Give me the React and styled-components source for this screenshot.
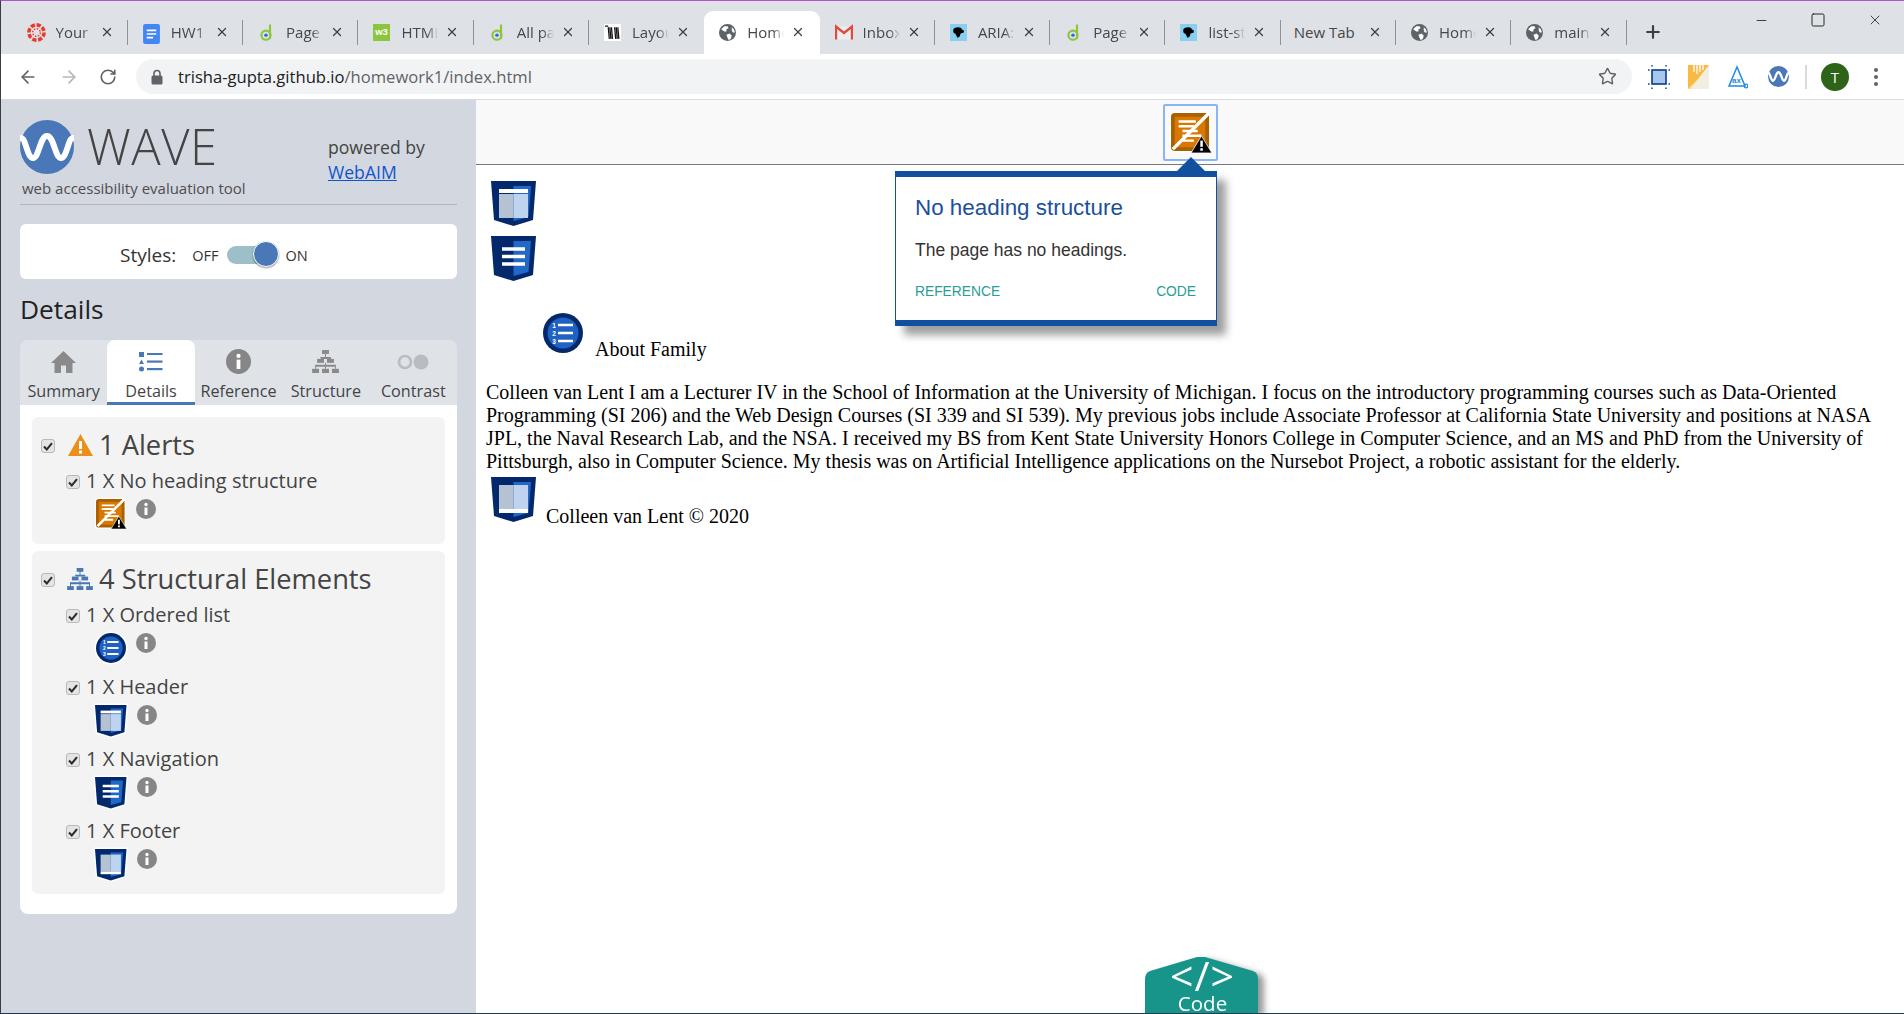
import React from 'react';
import styled, { createGlobalStyle } from 'styled-components';
import { ArrowLeft, ArrowRight, RotateCw, Star, X, Plus, Minus, Square } from 'lucide-react';

const GlobalStyle = createGlobalStyle`
  html, body { margin: 0; padding: 0; background: #fff; }
  body { width: 1904px; height: 1014px; overflow: hidden; }
`;

const Frame = styled.div`
  width: 1904px;
  height: 1014px;
  box-sizing: border-box;
  border-top: 1px solid #b651cc;
  border-left: 1px solid #3a3d42;
  border-bottom: 1px solid #1d3b4f;
  display: flex;
  flex-direction: column;
  font-family: 'Open Sans', sans-serif;
  overflow: hidden;
`;

const TabStrip = styled.div`
  height: 53px;
  flex: none;
  background: #dee1e6;
  display: flex;
  align-items: flex-end;
  padding-left: 11.5px;
  position: relative;
`;

const Tab = styled.div`
  flex: 0 0 115.3px;
  height: 43px;
  box-sizing: border-box;
  display: flex;
  align-items: center;
  padding-left: ${p => (p.$bare ? '13px' : '15px')};
  padding-bottom: 1px;
  background: ${p => (p.$active ? '#fff' : 'transparent')};
  border-radius: 9px 9px 0 0;
  color: #45474a;
  font-size: 15px;
`;

const TabIcon = styled.span`
  width: 17px;
  height: 17px;
  flex: none;
  margin-right: 11px;
  display: block;
  svg { display: block; }
`;

const TabTitle = styled.span`
  width: ${p => (p.$bare ? '70px' : '37px')};
  flex: none;
  overflow: hidden;
  white-space: nowrap;
  -webkit-mask-image: ${p => (p.$bare ? 'none' : 'linear-gradient(to right, #000 70%, transparent 100%)')};
`;

const TabClose = styled.span`
  margin-left: ${p => (p.$bare ? '4px' : '7px')};
  flex: none;
  display: flex;
  color: #3c4043;
`;

const TabDivider = styled.span`
  width: 1px;
  height: 25px;
  margin-left: auto;
  background: ${p => (p.$hidden ? 'transparent' : '#8f9296')};
`;

const NewTab = styled.span`
  display: flex;
  margin: 0 0 12px 16px;
  color: #3c4043;
`;

const WindowControls = styled.div`
  position: absolute;
  top: 9px;
  right: 21px;
  display: flex;
  align-items: center;
  gap: 41px;
  color: #1a1a1a;
  span { display: flex; width: 16px; justify-content: center; }
`;

const Toolbar = styled.div`
  height: 46px;
  flex: none;
  box-sizing: border-box;
  background: #fff;
  border-bottom: 1px solid #dcdcdc;
  display: flex;
  align-items: center;
`;

const NavButton = styled.span`
  width: 20px;
  display: flex;
  justify-content: center;
  margin-left: ${p => p.$gap}px;
  color: ${p => (p.$dim ? '#b4b6b9' : '#5f6368')};
`;

const Omnibox = styled.div`
  width: 1496px;
  height: 35px;
  margin-left: 18px;
  border-radius: 18px;
  background: #f1f3f4;
  display: flex;
  align-items: center;
  padding: 0 15px;
  box-sizing: border-box;
  font-size: 16.6px;
  color: #5f6368;
`;

const Host = styled.span`
  color: #202124;
`;

const UrlText = styled.span`
  margin-left: 15px;
  white-space: nowrap;
`;

const StarButton = styled.span`
  margin-left: auto;
  display: flex;
  color: #5f6368;
`;

const ExtIcon = styled.span`
  display: flex;
  margin-left: ${p => p.$gap}px;
`;

const ExtDivider = styled.span`
  width: 2px;
  height: 24px;
  background: #d8d9db;
  margin-left: 16px;
`;

const Avatar = styled.span`
  width: 28px;
  height: 28px;
  border-radius: 50%;
  background: #2e6417;
  color: #fff;
  display: flex;
  align-items: center;
  justify-content: center;
  font-size: 15px;
  margin-left: 14px;
`;

const Dots = styled.span`
  display: flex;
  flex-direction: column;
  gap: 3px;
  margin-left: 25px;
  i { width: 4px; height: 4px; border-radius: 50%; background: #5f6368; display: block; }
`;

const Body = styled.div`
  flex: 1;
  display: flex;
  min-height: 0;
`;

const Sidebar = styled.aside`
  width: 475px;
  flex: none;
  background: #d3d8e0;
  box-sizing: border-box;
  padding: 19px 19px 0 19px;
`;

const Brand = styled.div`
  display: flex;
  height: 85px;
  border-bottom: 1px solid #b2b6bc;
`;

const BrandLeft = styled.div`
  width: 308px;
  flex: none;
`;

const LogoRow = styled.div`
  display: flex;
  align-items: center;
  height: 55px;
`;

const WaveWord = styled.span`
  font-size: 49px;
  font-weight: 300;
  color: #444;
  margin-left: 13px;
  line-height: 55px;
  letter-spacing: .5px;
`;

const Tagline = styled.div`
  font-size: 15px;
  color: #4e4e4e;
  margin: 4px 0 0 2px;
  white-space: nowrap;
`;

const Powered = styled.div`
  font-size: 17.6px;
  line-height: 25px;
  color: #444;
  padding-top: 16px;
`;

const PoweredLink = styled.a`
  color: #1155cc;
  text-decoration: underline;
  display: block;
`;

const StylesCard = styled.div`
  height: 55px;
  box-sizing: border-box;
  padding: 7px 0 0 100px;
  margin-top: 19px;
  background: #fff;
  border-radius: 6px;
  display: flex;
  align-items: center;
  color: #333;
`;

const StylesLabel = styled.span`
  font-size: 19px;
`;

const SwitchLabel = styled.span`
  font-size: 14.5px;
  margin-left: ${p => p.$gap}px;
`;

const SwitchTrack = styled.span`
  width: 43px;
  height: 18px;
  border-radius: 9px;
  background: #9dbfc8;
  margin-left: 9px;
  position: relative;
`;

const SwitchKnob = styled.span`
  position: absolute;
  right: -9px;
  top: -5px;
  width: 24px;
  height: 24px;
  border-radius: 50%;
  background: #4a77b8;
  border: 1px solid #fff;
  box-shadow: 0 1px 2px rgba(0, 0, 0, .4);
`;

const DetailsHeading = styled.h2`
  margin: 12px 0 0;
  font-size: 26.3px;
  font-weight: 400;
  line-height: 36px;
  color: #222;
`;

const SideTabs = styled.div`
  margin-top: 13px;
  height: 65px;
  background: #dfe3e8;
  border-radius: 8px 8px 0 0;
  display: grid;
  grid-template-columns: repeat(5, 1fr);
`;

const SideTab = styled.div`
  display: flex;
  flex-direction: column;
  align-items: center;
  box-sizing: border-box;
  padding-top: 9px;
  background: ${p => (p.$active ? '#fff' : 'transparent')};
  border-radius: ${p => (p.$active ? '8px 8px 0 0' : '0')};
  border-bottom: 3px solid ${p => (p.$active ? '#4a77b8' : 'transparent')};
  color: #444;
  font-size: 16.2px;
`;

const SideTabIcon = styled.span`
  height: 25px;
  display: flex;
  align-items: center;
`;

const SideTabText = styled.span`
  margin-top: 6px;
  line-height: 22px;
  white-space: nowrap;
`;

const Panel = styled.div`
  background: #fff;
  border-radius: 0 0 8px 8px;
  padding: 12px 12px 20px;
  display: flex;
  flex-direction: column;
  gap: 7px;
`;

const Group = styled.section`
  background: #f3f3f3;
  border-radius: 6px;
  padding: 8px 9px 12px;
  color: #444;
`;

const GroupHead = styled.div`
  height: 40px;
  display: flex;
  align-items: center;
  margin-bottom: 3px;
`;

const GroupIcon = styled.span`
  width: 26px;
  display: flex;
  justify-content: center;
  margin-left: 12px;
  margin-right: 6px;
`;

const GroupTitle = styled.span`
  font-size: 27.3px;
  line-height: 40px;
`;

const CheckBox = styled.span`
  width: 14px;
  height: 14px;
  flex: none;
  box-sizing: border-box;
  border: 1px solid #b9b9b9;
  border-radius: 3px;
  background: #e4e4e4;
  display: flex;
  align-items: center;
  justify-content: center;
  margin-top: 2px;
`;

const ItemRow = styled.div`
  height: 26px;
  display: flex;
  align-items: center;
  padding-left: 25px;
  font-size: 20px;
`;

const ItemText = styled.span`
  margin: -2px 0 0 6px;
`;

const ItemIcons = styled.div`
  margin-top: 5px;
  height: 33px;
  display: flex;
  align-items: flex-start;
  padding-left: ${p => p.$pad}px;
  margin-bottom: ${p => (p.$last ? 0 : 8)}px;
`;

const InfoSlot = styled.span`
  margin-left: ${p => p.$gap}px;
  display: flex;
`;

const Content = styled.main`
  flex: 1;
  position: relative;
  background: #fff;
  min-width: 0;
`;

const IconBar = styled.div`
  height: 65px;
  box-sizing: border-box;
  background: #f9f9f9;
  border-bottom: 1px solid #777;
  display: flex;
  padding-top: 4px;
  padding-left: 687px;
`;

const SelectedIcon = styled.span`
  width: 55px;
  height: 57px;
  box-sizing: border-box;
  border: 2px solid #8ab4f8;
  border-radius: 2px;
  display: flex;
  align-items: center;
  justify-content: center;
`;

const Page = styled.div`
  padding: 16px 10px 0;
  font-family: 'Liberation Serif', serif;
  font-size: 20px;
  line-height: 23px;
  color: #000;
`;

const LandmarkRow = styled.div`
  display: flex;
  padding-left: 5px;
  margin-bottom: 10px;
  height: 45px;
`;

const ListRow = styled.div`
  display: flex;
  align-items: flex-start;
  margin-top: 32px;
  padding-left: 57px;
  height: 48px;
`;

const ListText = styled.span`
  margin: 25px 0 0 12px;
`;

const Paragraph = styled.p`
  margin: 20px 0 0;
`;

const FooterRow = styled.div`
  display: flex;
  align-items: flex-end;
  padding-left: 5px;
  margin-top: 4px;
`;

const FooterText = styled.span`
  margin-left: 10px;
  margin-bottom: -6px;
`;

const Tooltip = styled.div`
  position: absolute;
  left: 419px;
  top: 71px;
  width: 322px;
  height: 155px;
  box-sizing: border-box;
  background: #fff;
  border: 1px solid #11509f;
  border-width: 6px 1px;
  box-shadow: 9px 9px 8px rgba(0, 0, 0, .38);
  padding: 17px 20px 0 19px;
  font-family: 'Liberation Sans', Arial, sans-serif;
  &::before {
    content: '';
    position: absolute;
    top: -20px;
    right: 11px;
    border: solid transparent;
    border-width: 0 14px 14px;
    border-bottom-color: #11509f;
  }
`;

const TooltipTitle = styled.h3`
  margin: 0;
  font-size: 22.4px;
  font-weight: 400;
  line-height: 28px;
  color: #1b4f9c;
`;

const TooltipBody = styled.p`
  margin: 17px 0 0;
  font-size: 17.5px;
  line-height: 22px;
  color: #333;
`;

const TooltipLinks = styled.div`
  display: flex;
  justify-content: space-between;
  margin-top: 22px;
  font-size: 13.8px;
  line-height: 18px;
  color: #2a9d96;
`;

const CodeTab = styled.div`
  position: absolute;
  left: 669px;
  top: 857px;
  width: 113px;
  height: 56px;
  filter: drop-shadow(6px 3px 3px rgba(0, 0, 0, .4));
  color: #fff;
  text-align: center;
  padding-left: 2px;
  box-sizing: border-box;
  svg { position: absolute; inset: 0; }
`;

const CodeGlyph = styled.div`
  position: relative;
  font-size: 41px;
  font-weight: 500;
  line-height: 32px;
  letter-spacing: 1px;
  padding-top: 2px;
`;

const CodeLabel = styled.div`
  position: relative;
  font-size: 20.5px;
  line-height: 24px;
`;

/* drawings */

const Globe = () => (
  <svg width="17" height="17" viewBox="0 0 16 16">
    <circle cx="8" cy="8" r="8" fill="#5f6368" />
    <path d="M2 5l3-3 3 0 1 2-2 1 0 2-2 0zM7 10l3-1 2 2-1 3-2 1-1-2zM12 3l2 2 1 3-2 0-1-2z" fill="#fff" />
  </svg>
);

const DIcon = () => (
  <svg width="17" height="17" viewBox="0 0 16 16">
    <circle cx="7.5" cy="10.5" r="4.3" fill="none" stroke="#8cc63f" strokeWidth="2" />
    <path d="M11.3 0.5V14" stroke="#8cc63f" strokeWidth="2" fill="none" />
    <circle cx="7.5" cy="10.5" r="1.6" fill="#1a73c8" />
  </svg>
);

const CanvasIcon = () => (
  <svg width="19" height="19" viewBox="0 0 16 16" style={{ margin: '-1px' }}>
    <circle cx="8" cy="8" r="6.4" fill="none" stroke="#e8392b" strokeWidth="3" strokeDasharray="3.6 1.4" />
    <circle cx="8" cy="8" r="3.2" fill="none" stroke="#e8392b" strokeWidth="1.2" strokeDasharray="1.2 1.3" />
  </svg>
);

const DocsIcon = () => (
  <svg width="17" height="20" viewBox="0 0 16 19">
    <rect x="0" y="0" width="16" height="19" rx="2" fill="#4285f4" />
    <path d="M3.5 6h9M3.5 9.5h9M3.5 13h6" stroke="#fff" strokeWidth="1.6" />
  </svg>
);

const W3Icon = () => (
  <svg width="17" height="17" viewBox="0 0 16 16">
    <rect width="16" height="16" fill="#8cc63f" />
    <text x="8" y="10" fontSize="9" fontFamily="Liberation Sans" fontWeight="700" textAnchor="middle" fill="#fff">w3</text>
  </svg>
);

const BooksIcon = () => (
  <svg width="17" height="17" viewBox="0 0 16 16">
    <rect width="16" height="16" fill="#fff" />
    <path d="M1 2h3M4 3l1 11M7 3l1 11M10 3l1 11M13 3l1 11M5.500 3l1 11M11.500 3l1 11" stroke="#111" strokeWidth="1.2" />
  </svg>
);

const GmailIcon = () => (
  <svg width="18" height="17" viewBox="0 0 18 16">
    <path d="M1 2H17V15H1Z" fill="#eee" />
    <path d="M1 15V2L9 8.500 17 2V15" fill="none" stroke="#e04a3a" strokeWidth="2.400" />
  </svg>
);

const DogIcon = () => (
  <svg width="17" height="17" viewBox="0 0 16 16">
    <rect width="16" height="16" fill="#89d0f0" />
    <path d="M3 6c0-2 2-3 5-3 2 0 3 1 3 2l2 1 0 2-3 1-1 3-2 1-1-2-1-2c-1 0-2-1-2-3z" fill="#000" />
  </svg>
);

const CropIcon = () => (
  <svg width="22" height="24" viewBox="0 0 22 24">
    <rect x="4" y="5" width="14" height="14" fill="#a8c7ec" stroke="#0b3a8c" strokeWidth="1.600" />
    <path d="M0 5h1.500M20.500 5h1.500M0 19h1.500M20.500 19h1.500M4 0v1.500M18 0v1.500M4 22.500v1.500M18 22.500v1.500" stroke="#0b3a8c" strokeWidth="1.400" />
  </svg>
);

const ColorIcon = () => (
  <svg width="21" height="24" viewBox="0 0 21 24">
    <path d="M0 0h21v24H0z" fill="#fbe3a8" />
    <path d="M0 0h21L10 14 0 24z" fill="#f9ba45" />
    <path d="M21 0v24H3z" fill="#f2eee2" />
    <path d="M6 0v7M9 0v9M12 0v7M15 0v5" stroke="#fff" strokeWidth="1.300" />
  </svg>
);

const AxeIcon = () => (
  <svg width="20" height="24" viewBox="0 0 20 24">
    <path d="M9 2L1 21H17L9 2Z" fill="none" stroke="#1c8ae0" strokeWidth="1.500" />
    <text x="8.500" y="18" fontSize="8" fontFamily="Liberation Sans" fontWeight="700" textAnchor="middle" fill="#1c8ae0">ax</text>
    <circle cx="18" cy="21" r="1.800" fill="none" stroke="#1c8ae0" strokeWidth="1.200" />
  </svg>
);

const WaveLogo = ({ size, stroke }) => (
  <svg width={size} height={size} viewBox="0 0 54 54">
    <circle cx="27" cy="27" r="27" fill="#4a77b8" />
    <path d="M1 18C6 18 7 38 13 38 19 38 20 16 27 16 34 16 35 38 41 38 47 38 48 18 53 18" fill="none" stroke="#fff" strokeWidth={stroke} strokeLinecap="round" />
  </svg>
);

const Lock = () => (
  <svg width="12" height="16" viewBox="0 0 12 16">
    <path d="M3 7V4.500a3 3 0 0 1 6 0V7" fill="none" stroke="#5f6368" strokeWidth="1.600" />
    <rect x="0.500" y="6.500" width="11" height="9" rx="1.500" fill="#5f6368" />
  </svg>
);

const HomeIcon = () => (
  <svg width="25" height="22" viewBox="0 0 25 22">
    <path d="M12.500 0L25 12H21.500V22H15V14.500H10V22H3.500V12H0Z" fill="#8a8a8a" />
  </svg>
);

const ListTabIcon = () => (
  <svg width="24" height="20" viewBox="0 0 24 20" fill="#4a77b8">
    <rect x="0" y="0" width="5" height="5" />
    <path d="M2.500 7.500L5 12H0Z" />
    <circle cx="2.500" cy="17" r="2.500" />
    <rect x="8" y="1" width="15.500" height="2" />
    <rect x="8" y="8.500" width="15.500" height="2.200" />
    <rect x="8" y="16" width="15.500" height="2.200" />
  </svg>
);

const InfoIcon = ({ size = 20 }) => (
  <svg width={size} height={size} viewBox="0 0 20 20">
    <circle cx="10" cy="10" r="10" fill="#868686" />
    <circle cx="10" cy="5.500" r="1.700" fill="#fff" />
    <rect x="8.500" y="8.500" width="3" height="7.500" fill="#fff" />
  </svg>
);

const TreeIcon = ({ color, w = 27 }) => (
  <svg width={w} height={w * 0.88} viewBox="0 0 27 24" fill={color}>
    <rect x="10" y="0" width="7" height="4" />
    <rect x="5" y="9" width="7" height="4" />
    <rect x="15" y="9" width="7" height="4" />
    <rect x="0" y="19" width="7" height="5" />
    <rect x="10" y="19" width="7" height="5" />
    <rect x="20" y="19" width="7" height="5" />
    <path d="M13 4h1v3h-1zM8 7h11v2h-1v0H9zM3 15h21v2H3zM13 13h1v6h-1zM3 15h1v4H3zM23 15h1v4h-1z" />
  </svg>
);

const ContrastIcon = () => (
  <svg width="32" height="16" viewBox="0 0 32 16">
    <circle cx="8" cy="8" r="6" fill="none" stroke="#b9bcc0" strokeWidth="2.600" />
    <circle cx="24" cy="8" r="7.500" fill="#b9bcc0" />
  </svg>
);

const AlertTriangle = () => (
  <svg width="25" height="22" viewBox="0 0 25 22">
    <path d="M12.500 0L25 22H0Z" fill="#e8901a" />
    <rect x="11" y="7" width="3" height="8" fill="#fff" />
    <rect x="11" y="16.500" width="3" height="3" fill="#fff" />
  </svg>
);

const NoHeadingIcon = ({ size }) => (
  <svg width={size} height={size} viewBox="0 0 42 42" style={{ overflow: 'visible', display: 'block' }}>
    <rect x="0" y="0" width="40" height="40" rx="4" fill="#fff" stroke="#fff" strokeWidth="3" />
    <rect x="0" y="0" width="40" height="40" rx="4" fill="#a96000" />
    <rect x="4" y="4" width="32" height="32" fill="#d87800" />
    <path d="M8 9h18M8 14h16M12 19h16M12 24h20M12 29h12" stroke="#fff" strokeWidth="2.600" fill="none" />
    <path d="M40 0L2 38" stroke="#fff" strokeWidth="3.500" />
    <path d="M32 24L43 42H21Z" fill="#000" stroke="#fff" strokeWidth="0.800" />
    <rect x="30.800" y="29" width="2.600" height="6.500" fill="#fff" />
    <rect x="30.800" y="37" width="2.600" height="2.600" fill="#fff" />
  </svg>
);

const Landmark = ({ kind, size = 45, outline }) => (
  <svg width={size} height={size} viewBox="0 0 45 45" style={{ overflow: 'visible', display: 'block' }}>
    {outline && <path d="M0 0H45L42 39L22.500 45L3 39Z" fill="#fff" stroke="#fff" strokeWidth="4" />}
    <path d="M0 0H45L42 39L22.500 45L3 39Z" fill="#03286b" />
    <path d="M22.500 5H40L37.500 36L22.500 40Z" fill="#2268c9" />
    {kind === 'nav' ? (
      <path d="M11 13h23M11 20.500h23M11 28h23" stroke="#fff" strokeWidth="3.600" />
    ) : (
      <>
        <rect x="8" y={kind === 'header' ? 13 : 8} width="14.500" height="24" fill="#b5c2d4" />
        <rect x="22.500" y={kind === 'header' ? 13 : 8} width="14.500" height="24" fill="#bdd3ef" />
        <rect x="8" y={kind === 'header' ? 8 : 32} width="29" height="4" fill="#fff" />
      </>
    )}
  </svg>
);

const ListIcon = ({ size = 40, outline }) => (
  <svg width={size} height={size} viewBox="0 0 40 40" style={{ overflow: 'visible', display: 'block' }}>
    {outline && <circle cx="20" cy="20" r="22" fill="#fff" />}
    <circle cx="20" cy="20" r="20" fill="#03286b" />
    <circle cx="20" cy="20" r="15.500" fill="#1f62c4" />
    <path d="M15 12h15M15 20h15M15 28h15" stroke="#fff" strokeWidth="2.400" />
    <g fontFamily="Liberation Sans" fontSize="6.500" fontWeight="700" fill="#fff" textAnchor="middle">
      <text x="11" y="14.500">1</text>
      <text x="11" y="22.500">2</text>
      <text x="11" y="30.500">3</text>
    </g>
  </svg>
);

const Check = () => (
  <svg width="10" height="9" viewBox="0 0 10 9">
    <path d="M1 4.500L3.800 7.500L9 1.200" fill="none" stroke="#2b2b2b" strokeWidth="2" />
  </svg>
);

const TABS = [
  { icon: <CanvasIcon />, title: 'Your Profile' },
  { icon: <DocsIcon />, title: 'HW1 Doc' },
  { icon: <DIcon />, title: 'Page' },
  { icon: <W3Icon />, title: 'HTML Tutorial' },
  { icon: <DIcon />, title: 'All pages' },
  { icon: <BooksIcon />, title: 'Layout', noDivider: true },
  { icon: <Globe />, title: 'Home', active: true, noDivider: true },
  { icon: <GmailIcon />, title: 'Inbox' },
  { icon: <DogIcon />, title: 'ARIA:' },
  { icon: <DIcon />, title: 'Page' },
  { icon: <DogIcon />, title: 'list-style' },
  { title: 'New Tab' },
  { icon: <Globe />, title: 'Home' },
  { icon: <Globe />, title: 'main' },
];

const SIDE_TABS = [
  { label: 'Summary', icon: <HomeIcon /> },
  { label: 'Details', icon: <ListTabIcon />, active: true },
  { label: 'Reference', icon: <InfoIcon size={25} /> },
  { label: 'Structure', icon: <TreeIcon color="#8a8a8a" /> },
  { label: 'Contrast', icon: <ContrastIcon /> },
];

const STRUCTURE = [
  { label: '1 X Ordered list', pad: 55, gap: 10, icon: <ListIcon size={30} outline /> },
  { label: '1 X Header', pad: 54, gap: 10, icon: <Landmark kind="header" size={31.5} outline /> },
  { label: '1 X Navigation', pad: 54, gap: 10, icon: <Landmark kind="nav" size={31.5} outline /> },
  { label: '1 X Footer', pad: 54, gap: 10, icon: <Landmark kind="footer" size={31.5} outline />, last: true },
];

const Item = ({ label, icon, pad, gap, last }) => (
  <>
    <ItemRow>
      <CheckBox><Check /></CheckBox>
      <ItemText>{label}</ItemText>
    </ItemRow>
    <ItemIcons $pad={pad} $last={last}>
      {icon}
      <InfoSlot $gap={gap}><InfoIcon /></InfoSlot>
    </ItemIcons>
  </>
);

const App = () => {
  return (
    <Frame>
      <GlobalStyle />
      <TabStrip>
        {TABS.map((t, i) => (
          <Tab key={i} $active={t.active} $bare={!t.icon}>
            {t.icon && <TabIcon>{t.icon}</TabIcon>}
            <TabTitle $bare={!t.icon}>{t.title}</TabTitle>
            <TabClose $bare={!t.icon}><X size={14} strokeWidth={2.2} /></TabClose>
            <TabDivider $hidden={t.noDivider} />
          </Tab>
        ))}
        <NewTab><Plus size={20} strokeWidth={2.6} /></NewTab>
        <WindowControls>
          <span><Minus size={15} strokeWidth={1.3} /></span>
          <span><Square size={16} strokeWidth={1.4} /></span>
          <span><X size={20} strokeWidth={1.2} /></span>
        </WindowControls>
      </TabStrip>

      <Toolbar>
        <NavButton $gap={17}><ArrowLeft size={20} strokeWidth={2} /></NavButton>
        <NavButton $gap={21} $dim><ArrowRight size={20} strokeWidth={2} /></NavButton>
        <NavButton $gap={19}><RotateCw size={18} strokeWidth={2.2} /></NavButton>
        <Omnibox>
          <Lock />
          <UrlText><Host>trisha-gupta.github.io</Host>/homework1/index.html</UrlText>
          <StarButton><Star size={19} strokeWidth={1.8} /></StarButton>
        </Omnibox>
        <ExtIcon $gap={16}><CropIcon /></ExtIcon>
        <ExtIcon $gap={18}><ColorIcon /></ExtIcon>
        <ExtIcon $gap={19}><AxeIcon /></ExtIcon>
        <ExtIcon $gap={20}><WaveLogo size={21} stroke={6} /></ExtIcon>
        <ExtDivider />
        <Avatar>T</Avatar>
        <Dots><i /><i /><i /></Dots>
      </Toolbar>

      <Body>
        <Sidebar>
          <Brand>
            <BrandLeft>
              <LogoRow>
                <WaveLogo size={54} stroke={6} />
                <WaveWord>WAVE</WaveWord>
              </LogoRow>
              <Tagline>web accessibility evaluation tool</Tagline>
            </BrandLeft>
            <Powered>
              powered by
              <PoweredLink>WebAIM</PoweredLink>
            </Powered>
          </Brand>

          <StylesCard>
            <StylesLabel>Styles:</StylesLabel>
            <SwitchLabel $gap={16}>OFF</SwitchLabel>
            <SwitchTrack><SwitchKnob /></SwitchTrack>
            <SwitchLabel $gap={15}>ON</SwitchLabel>
          </StylesCard>

          <DetailsHeading>Details</DetailsHeading>

          <SideTabs>
            {SIDE_TABS.map(t => (
              <SideTab key={t.label} $active={t.active}>
                <SideTabIcon>{t.icon}</SideTabIcon>
                <SideTabText>{t.label}</SideTabText>
              </SideTab>
            ))}
          </SideTabs>

          <Panel>
            <Group>
              <GroupHead>
                <CheckBox><Check /></CheckBox>
                <GroupIcon><AlertTriangle /></GroupIcon>
                <GroupTitle>1 Alerts</GroupTitle>
              </GroupHead>
              <Item label="1 X No heading structure" pad={55} gap={10} last icon={<NoHeadingIcon size={30} />} />
            </Group>
            <Group>
              <GroupHead>
                <CheckBox><Check /></CheckBox>
                <GroupIcon><TreeIcon color="#4a77b8" w={26} /></GroupIcon>
                <GroupTitle>4 Structural Elements</GroupTitle>
              </GroupHead>
              {STRUCTURE.map(s => <Item key={s.label} {...s} />)}
            </Group>
          </Panel>
        </Sidebar>

        <Content>
          <IconBar>
            <SelectedIcon><NoHeadingIcon size={40} /></SelectedIcon>
          </IconBar>

          <Page>
            <LandmarkRow><Landmark kind="header" /></LandmarkRow>
            <LandmarkRow><Landmark kind="nav" /></LandmarkRow>
            <ListRow>
              <ListIcon />
              <ListText>About Family</ListText>
            </ListRow>
            <Paragraph>
              Colleen van Lent I am a Lecturer IV in the School of Information at the University of Michigan. I focus on the introductory programming courses such as Data-Oriented Programming (SI 206) and the Web Design Courses (SI 339 and SI 539). My previous jobs include Associate Professor at California State University and positions at NASA JPL, the Naval Research Lab, and the NSA. I received my BS from Kent State University Honors College in Computer Science, and an MS and PhD from the University of Pittsburgh, also in Computer Science. My thesis was on Artificial Intelligence applications on the Nursebot Project, a robotic assistant for the elderly.
            </Paragraph>
            <FooterRow>
              <Landmark kind="footer" />
              <FooterText>Colleen van Lent © 2020</FooterText>
            </FooterRow>
          </Page>

          <Tooltip>
            <TooltipTitle>No heading structure</TooltipTitle>
            <TooltipBody>The page has no headings.</TooltipBody>
            <TooltipLinks>
              <span>REFERENCE</span>
              <span>CODE</span>
            </TooltipLinks>
          </Tooltip>

          <CodeTab>
            <svg width="113" height="56" viewBox="0 0 113 56">
              <path d="M0 22Q0 16 5 14L52 0Q56 -1 60 0L108 14Q113 16 113 22V56H0Z" fill="#18958a" />
            </svg>
            <CodeGlyph>&lt;/&gt;</CodeGlyph>
            <CodeLabel>Code</CodeLabel>
          </CodeTab>
        </Content>
      </Body>
    </Frame>
  );
};

export default App;
